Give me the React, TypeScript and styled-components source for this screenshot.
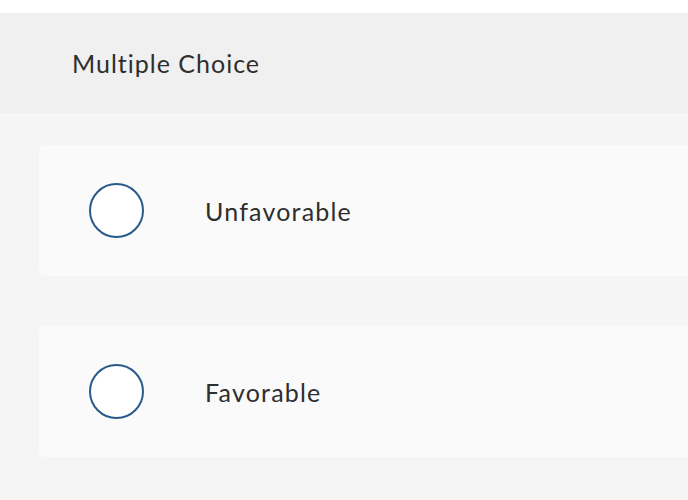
import React from 'react';
import styled, { createGlobalStyle } from 'styled-components';

const GlobalStyle = createGlobalStyle`
  html, body {
    margin: 0;
    padding: 0;
    background: #ffffff;
  }
  body {
    font-family: Lato, "Open Sans", sans-serif;
    color: #333333;
  }
`;

const options = ['Unfavorable', 'Favorable'];

const App = () => {
  return (
    <>
      <GlobalStyle />
      <S.Page>
        <S.Header>
          <S.Title>Multiple Choice</S.Title>
        </S.Header>
        <S.Body>
          {options.map((label) => (
            <S.Option key={label}>
              <S.Radio />
              <S.Label>{label}</S.Label>
            </S.Option>
          ))}
        </S.Body>
      </S.Page>
    </>
  );
};

export default App;

const S = {
  Page: styled.div`
    padding-top: 13px;
    width: 688px;
    height: 500px;
    box-sizing: border-box;
    display: flex;
    flex-direction: column;
    overflow: hidden;
  `,
  Header: styled.div`
    height: 100px;
    background-color: #f0f0f0;
    display: flex;
    align-items: center;
    padding-left: 72px;
    flex-shrink: 0;
  `,
  Title: styled.h1`
    margin: 0;
    font-size: 25px;
    font-weight: 400;
    letter-spacing: 1px;
    font-variant-ligatures: none;
    color: #2e2e2e;
  `,
  Body: styled.div`
    flex: 1;
    background-color: #f5f5f5;
    padding: 32px 0 0 39px;
    display: flex;
    flex-direction: column;
    gap: 50px;
  `,
  Option: styled.div`
    height: 131px;
    margin-right: -10px;
    background-color: #fafafa;
    border-radius: 5px;
    display: flex;
    align-items: center;
    padding-left: 50px;
    cursor: pointer;
  `,
  Radio: styled.span`
    width: 55px;
    height: 55px;
    box-sizing: border-box;
    border: 2px solid #285a8c;
    border-radius: 50%;
    background-color: #ffffff;
    flex-shrink: 0;
  `,
  Label: styled.span`
    margin-left: 61px;
    font-size: 25px;
    letter-spacing: 1.2px;
    color: #2e2e2e;
  `,
};
